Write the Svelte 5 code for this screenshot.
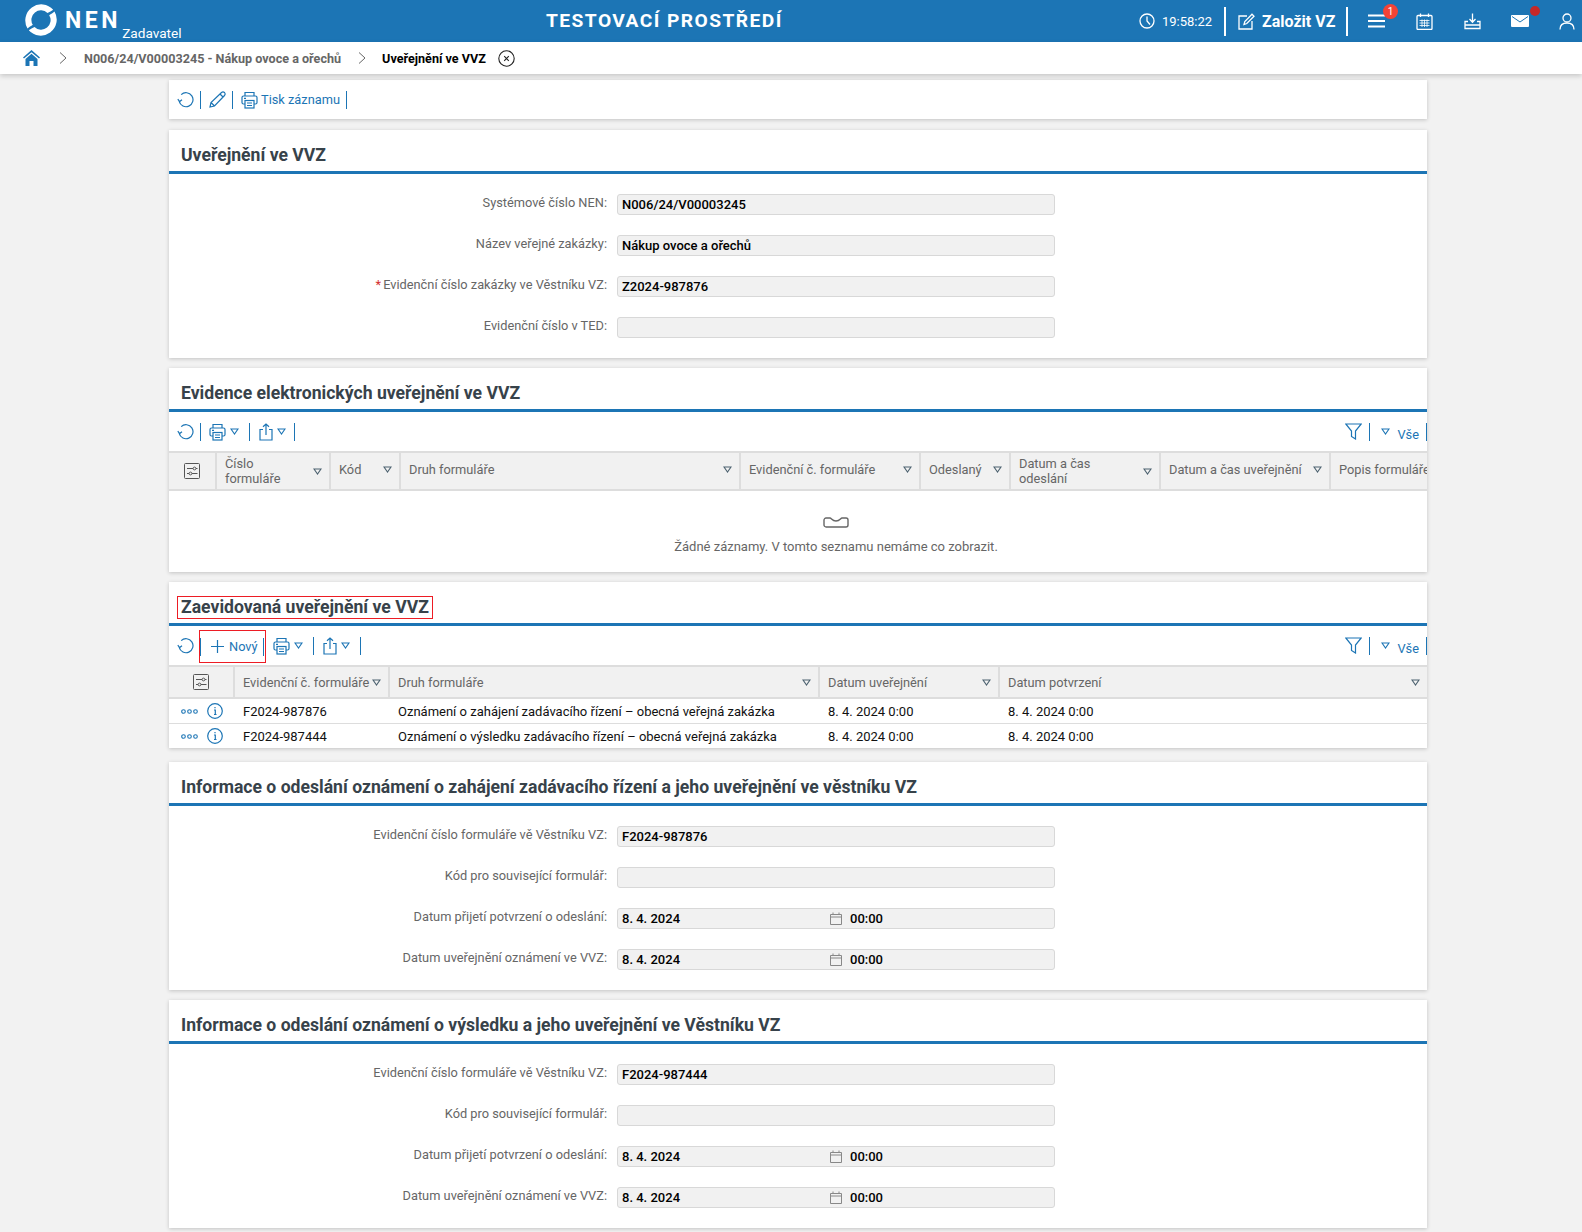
<script>
	const topForm = [
		{ label: 'Systémové číslo NEN:', value: 'N006/24/V00003245' },
		{ label: 'Název veřejné zakázky:', value: 'Nákup ovoce a ořechů' },
		{ label: 'Evidenční číslo zakázky ve Věstníku VZ:', value: 'Z2024-987876', required: true },
		{ label: 'Evidenční číslo v TED:', value: '' }
	];

	const infoForm = (num) => [
		{ label: 'Evidenční číslo formuláře vě Věstníku VZ:', value: num },
		{ label: 'Kód pro související formulář:', value: '' },
		{ label: 'Datum přijetí potvrzení o odeslání:', value: '8. 4. 2024', time: '00:00' },
		{ label: 'Datum uveřejnění oznámení ve VVZ:', value: '8. 4. 2024', time: '00:00' }
	];

	const evidenceCols = [
		['Číslo', 'formuláře'],
		['Kód'],
		['Druh formuláře'],
		['Evidenční č. formuláře'],
		['Odeslaný'],
		['Datum a čas', 'odeslání'],
		['Datum a čas uveřejnění'],
		['Popis formuláře']
	];

	const registeredCols = ['Evidenční č. formuláře', 'Druh formuláře', 'Datum uveřejnění', 'Datum potvrzení'];

	const rows = [
		['F2024-987876', 'Oznámení o zahájení zadávacího řízení – obecná veřejná zakázka', '8. 4. 2024 0:00', '8. 4. 2024 0:00'],
		['F2024-987444', 'Oznámení o výsledku zadávacího řízení – obecná veřejná zakázka', '8. 4. 2024 0:00', '8. 4. 2024 0:00']
	];

	const swoosh = 'M29.2 6.7A16 16 0 0 0 3.5 25.5C5 24 7 23 8.8 21.8A9.5 9.5 0 0 1 23.5 10C25.5 9 27.5 8 29.2 6.7Z';
</script>

{#snippet refresh()}
	<svg class="ico" width="17" height="17" viewBox="0 0 17 17">
		<path d="M4.2 3.6A7 7 0 1 1 2.2 10.4" />
		<path d="M0.8 8.2L2.6 10.6L5 8.8" />
	</svg>
{/snippet}

{#snippet print()}
	<svg class="ico" width="17" height="18" viewBox="0 0 17 18">
		<path d="M4 5V1.5H13V5" />
		<rect x="1" y="5" width="15" height="8" rx="1.5" />
		<rect x="4" y="9.5" width="9" height="7.5" fill="#fff" />
		<path d="M6 12H11M6 14.5H11M3 7.3H5" />
	</svg>
{/snippet}

{#snippet share()}
	<svg class="ico" width="14" height="18" viewBox="0 0 14 18">
		<path d="M4 6.5H1V17H13V6.5H10" />
		<path d="M7 12V1M4 3.8L7 1L10 3.8" />
	</svg>
{/snippet}

{#snippet tri()}
	<svg class="tri" width="9" height="7" viewBox="0 0 9 7"><path d="M1 1H8L4.5 6Z" /></svg>
{/snippet}

{#snippet forms(items)}
	<div class="form">
		{#each items as f}
			<div class="form-row">
				<span class="form-label">{#if f.required}<i>*</i>{/if}{f.label}</span>
				<div class="field">
					<span class="field-value">{f.value}</span>
					{#if f.time}
						<svg class="field-cal" width="12" height="13" viewBox="0 0 12 13">
							<path d="M0.5 2.5H11.5V12.5H0.5ZM0.5 5H11.5M3 0.5V3M9 0.5V3" />
						</svg>
						<span class="field-value time-value">{f.time}</span>
					{/if}
				</div>
			</div>
		{/each}
	</div>
{/snippet}

{#snippet settingsIcon()}
	<svg class="settings" width="16" height="16" viewBox="0 0 16 16">
		<rect x="0.5" y="0.5" width="15" height="15" rx="1" />
		<path d="M3 5.5H9M12 5.5H13.5M3 10.5H5M8 10.5H13.5" />
		<circle cx="10.5" cy="5.5" r="1.4" />
		<circle cx="6.5" cy="10.5" r="1.4" />
	</svg>
{/snippet}

{#snippet rightTools()}
	<div class="tools-right">
		<svg class="ico" width="17" height="17" viewBox="0 0 17 17"><path d="M0.8 1H16.2L10.5 8V16L6.5 13.5V8Z" /></svg>
		<span class="sep filter-sep"></span>
		{@render tri()}
		<span class="link all">Vše</span>
		<span class="sep"></span>
	</div>
{/snippet}

<header class="topbar">
	<div class="brand">
		<svg width="34" height="34" viewBox="0 0 34 34">
			<path fill="#fff" d={swoosh} />
			<path fill="#fff" transform="rotate(180 17 17)" d={swoosh} />
		</svg>
		<b class="brand-name">NEN</b>
		<span class="brand-role">Zadavatel</span>
	</div>
	<div class="env">TESTOVACÍ PROSTŘEDÍ</div>
	<div class="top-tools">
		<svg class="white clock" width="16" height="16" viewBox="0 0 16 16">
			<circle cx="8" cy="8" r="7" /><path d="M8 3.5V8L11 11.5" />
		</svg>
		<span class="time">19:58:22</span>
		<span class="top-sep"></span>
		<svg class="white" width="17" height="17" viewBox="0 0 17 17">
			<path d="M9 3H1V16H14V8" /><path d="M6 11.5L6.8 8.5L14 1.2L16 3.2L8.8 10.5Z" />
		</svg>
		<b class="create">Založit VZ</b>
		<span class="top-sep"></span>
		<div class="top-icon menu">
			<svg class="white thick" width="17" height="14" viewBox="0 0 17 14"><path d="M0 1.5H17M0 7H17M0 12.5H17" /></svg>
			<span class="badge">1</span>
		</div>
		<div class="top-icon">
			<svg class="white" width="17" height="17" viewBox="0 0 17 17">
				<rect x="1" y="2.5" width="15" height="14" rx="1" />
				<path d="M4.5 0.5V4M12.5 0.5V4" />
				<path class="dense" d="M3.5 7.5H13.5M3.5 10H13.5M3.5 12.5H13.5M6 6.5V14M8.5 6.5V14M11 6.5V14" />
			</svg>
		</div>
		<div class="top-icon">
			<svg class="white" width="17" height="17" viewBox="0 0 17 17">
				<path d="M8.5 0.5V9M5.5 6L8.5 9.2L11.5 6" />
				<path d="M4 8.5H1V15.5H16V8.5H13M1 12H16" />
			</svg>
		</div>
		<div class="top-icon mail">
			<svg width="18" height="12" viewBox="0 0 18 12">
				<rect width="18" height="12" rx="1" fill="#fff" />
				<path d="M1 1.5L9 7L17 1.5" fill="none" stroke="#1c75b5" stroke-width="1" />
			</svg>
			<span class="dot"></span>
		</div>
		<div class="top-icon">
			<svg class="white" width="16" height="17" viewBox="0 0 16 17">
				<circle cx="8" cy="5" r="4" /><path d="M1 16.5C1 12 4 10 8 10C12 10 15 12 15 16.5" />
			</svg>
		</div>
	</div>
</header>

<nav class="crumbs">
	<svg class="home" width="17" height="16" viewBox="0 0 17 16">
		<path fill="#1c75b5" d="M8.5 0L0 7.5L1 8.6L8.5 2.2L16 8.6L17 7.5ZM8.5 3.8L2.5 9V16H6.5V11H10.5V16H14.5V9Z" />
	</svg>
	<svg class="chev first" width="8" height="12" viewBox="0 0 8 12"><path d="M1 0.5L7 6L1 11.5" /></svg>
	<b class="crumb">N006/24/V00003245 - Nákup ovoce a ořechů</b>
	<svg class="chev" width="8" height="12" viewBox="0 0 8 12"><path d="M1 0.5L7 6L1 11.5" /></svg>
	<b class="crumb current">Uveřejnění ve VVZ</b>
	<svg class="close" width="17" height="17" viewBox="0 0 17 17">
		<circle cx="8.5" cy="8.5" r="7.7" /><path d="M6.2 6.2L10.8 10.8M10.8 6.2L6.2 10.8" />
	</svg>
</nav>

<main class="page">
	<div class="card toolbar-card">
		<div class="tools">
			{@render refresh()}
			<span class="sep"></span>
			<svg class="ico" width="17" height="17" viewBox="0 0 17 17">
				<path d="M1 16L2 11.5L12.5 1.5C13.5 0.7 14.5 0.7 15.5 1.5C16.3 2.5 16.3 3.5 15.5 4.5L5.5 15ZM11 3L14.5 6.5M2 11.5L5.5 15" />
			</svg>
			<span class="sep"></span>
			{@render print()}
			<span class="link print-label">Tisk záznamu</span>
			<span class="sep"></span>
		</div>
	</div>

	<section class="card">
		<h2><span>Uveřejnění ve VVZ</span></h2>
		{@render forms(topForm)}
	</section>

	<section class="card">
		<h2><span>Evidence elektronických uveřejnění ve VVZ</span></h2>
		<div class="tools table-tools">
			{@render refresh()}
			<span class="sep"></span>
			{@render print()}
			{@render tri()}
			<span class="sep wide"></span>
			{@render share()}
			{@render tri()}
			<span class="sep end"></span>
			{@render rightTools()}
		</div>
		<div class="thead evidence">
			<div class="th center">{@render settingsIcon()}</div>
			{#each evidenceCols as col, i}
				<div class="th" class:single={col.length === 1}>
					<span class="th-text">
						{#each col as line}<span class="th-line">{line}</span>{/each}
					</span>
					{#if i < evidenceCols.length - 1}{@render tri()}{/if}
				</div>
			{/each}
		</div>
		<div class="empty">
			<svg width="26" height="11" viewBox="0 0 26 11">
				<path d="M3 1H7C8.5 1 9 4 13 4C17 4 17.5 1 19 1H23C24 1 25 2 25 3V8C25 9 24 10 23 10H3C2 10 1 9 1 8V3C1 2 2 1 3 1Z" />
			</svg>
			<p>Žádné záznamy. V tomto seznamu nemáme co zobrazit.</p>
		</div>
	</section>

	<section class="card">
		<h2 class="marked"><span>Zaevidovaná uveřejnění ve VVZ</span></h2>
		<div class="tools table-tools">
			{@render refresh()}
			<div class="new-btn">
				<span class="sep"></span>
				<svg class="ico plus" width="13" height="13" viewBox="0 0 13 13"><path d="M6.5 0V13M0 6.5H13" /></svg>
				<span class="link">Nový</span>
				<span class="sep"></span>
			</div>
			{@render print()}
			{@render tri()}
			<span class="sep wide"></span>
			{@render share()}
			{@render tri()}
			<span class="sep wide"></span>
			{@render rightTools()}
		</div>
		<div class="thead registered">
			<div class="th center">{@render settingsIcon()}</div>
			{#each registeredCols as col}
				<div class="th"><span class="th-text">{col}</span>{@render tri()}</div>
			{/each}
		</div>
		{#each rows as row}
			<div class="tr">
				<div class="td actions">
					<svg class="ico dots" width="17" height="5" viewBox="0 0 17 5">
						<circle cx="2.5" cy="2.5" r="1.8" /><circle cx="8.5" cy="2.5" r="1.8" /><circle cx="14.5" cy="2.5" r="1.8" />
					</svg>
					<svg class="ico" width="16" height="16" viewBox="0 0 16 16">
						<circle cx="8" cy="8" r="7.3" /><path d="M7 7H8.3V11.5M7 11.5H9.5M8 4V5.2" />
					</svg>
				</div>
				{#each row as cell}<div class="td">{cell}</div>{/each}
			</div>
		{/each}
	</section>

	<section class="card first-info">
		<h2><span>Informace o odeslání oznámení o zahájení zadávacího řízení a jeho uveřejnění ve věstníku VZ</span></h2>
		{@render forms(infoForm('F2024-987876'))}
	</section>

	<section class="card">
		<h2><span>Informace o odeslání oznámení o výsledku a jeho uveřejnění ve Věstníku VZ</span></h2>
		{@render forms(infoForm('F2024-987444'))}
	</section>
</main>

<style>
	:global(body) {
		margin: 0;
		background: #f2f2f2;
		font-family: Roboto, 'Liberation Sans', sans-serif;
		font-size: 12.8px;
		color: #666;
	}

	svg {
		display: block;
		flex: none;
	}

	/* top bar */
	.topbar {
		height: 42px;
		background: #1c75b5;
		color: #fff;
		display: flex;
		align-items: center;
	}

	.brand {
		width: 546px;
		height: 42px;
		display: flex;
		align-items: flex-start;
		box-sizing: border-box;
		padding: 3px 0 0 24px;
	}

	.brand-name {
		font-size: 23px;
		letter-spacing: 3.6px;
		line-height: 27px;
		margin: 4px 0 0 7px;
	}

	.brand-role {
		font-size: 13.6px;
		line-height: 15px;
		margin: 23px 0 0 1px;
	}

	.env {
		font-size: 19.2px;
		font-weight: 700;
		letter-spacing: 1.44px;
		padding-bottom: 2px;
	}

	.top-tools {
		margin-left: auto;
		display: flex;
		align-items: center;
		padding-right: 6px;
		height: 42px;
	}

	.white {
		fill: none;
		stroke: #fff;
		stroke-width: 1.3;
	}

	.white.thick {
		stroke-width: 2;
	}

	.white .dense {
		stroke-width: 0.8;
	}

	.time {
		margin-left: 7px;
		width: 62px;
		font-size: 13px;
	}

	.top-sep {
		width: 2px;
		height: 29px;
		background: #fff;
	}

	.create {
		font-size: 16px;
		margin-left: 7px;
		width: 84px;
	}

	.top-sep + svg {
		margin-left: 12px;
	}

	.top-icon {
		position: relative;
		width: 17px;
		margin-left: 31px;
	}

	.top-icon.menu {
		margin-left: 20px;
	}

	.top-icon.mail {
		margin-left: 30px;
	}

	.badge {
		position: absolute;
		left: 15px;
		top: -10px;
		width: 15px;
		height: 15px;
		border-radius: 50%;
		background: #f44336;
		font-size: 10px;
		line-height: 15px;
		text-align: center;
	}

	.dot {
		position: absolute;
		left: 19px;
		top: -9px;
		width: 10px;
		height: 10px;
		border-radius: 50%;
		background: #c62828;
	}

	/* breadcrumb */
	.crumbs {
		height: 32px;
		background: #fff;
		display: flex;
		align-items: center;
		padding-left: 23px;
		box-shadow: 0 2px 5px rgba(0, 0, 0, 0.18);
		position: relative;
	}

	.chev {
		fill: none;
		stroke: #666;
		stroke-width: 1;
		margin: 0 16px 0 17px;
	}

	.chev.first {
		margin: 0 17px 0 19px;
	}

	.crumb {
		font-weight: 700;
		font-size: 12.6px;
		color: #666;
	}

	.crumb.current {
		color: #000;
	}

	.close {
		fill: none;
		stroke: #222;
		stroke-width: 1.1;
		margin-left: 12px;
	}

	/* content column */
	.page {
		width: 1258px;
		margin: 6px 0 0 169px;
		display: flex;
		flex-direction: column;
		gap: 10px;
		height: 1154px;
	}

	.card {
		background: #fff;
		box-shadow: 0 1px 4px rgba(0, 0, 0, 0.2);
	}

	.first-info {
		margin-top: 4px;
	}

	.toolbar-card {
		height: 39px;
		display: flex;
		align-items: center;
		margin-bottom: 1px;
	}

	h2 {
		margin: 0;
		height: 41px;
		border-bottom: 3px solid #1c75b5;
		box-sizing: content-box;
		padding: 0 0 0 12px;
		font-size: 17.6px;
		font-weight: 700;
		line-height: 50px;
		color: #37424a;
		white-space: nowrap;
	}

	h2.marked {
		padding-left: 8px;
		display: block;
	}

	h2.marked span {
		display: inline-block;
		border: 1px solid #ed1c24;
		padding: 0 3px;
		line-height: 21px;
		vertical-align: 0;
	}

	/* toolbars */
	.tools {
		flex: 1;
		display: flex;
		align-items: center;
		padding-left: 8px;
		height: 39px;
	}

	.ico {
		fill: none;
		stroke: #1c75b5;
		stroke-width: 1.2;
	}

	.tri {
		fill: none;
		stroke: #1c75b5;
		stroke-width: 1.1;
		margin-left: 4px;
	}

	.sep {
		width: 1px;
		height: 18px;
		background: #1c75b5;
		margin: 0 8px 0 6px;
		flex: none;
	}

	.sep.wide {
		margin: 0 9px 0 10px;
	}

	.sep.end {
		margin-left: 8px;
	}

	.link {
		color: #1c75b5;
		font-size: 12.8px;
		white-space: nowrap;
	}

	.print-label {
		margin-left: 3px;
	}

	.tools-right {
		margin-left: auto;
		display: flex;
		align-items: center;
	}

	.tools-right .tri {
		margin-left: 0;
	}

	.tools-right .sep {
		margin: 0 0 0 7px;
	}

	.tools-right .filter-sep {
		margin: 0 11px 0 7px;
	}

	.all {
		margin-left: 7px;
		padding-top: 5px;
	}

	.new-btn {
		display: flex;
		align-items: center;
		border: 1px solid #ed1c24;
		box-sizing: border-box;
		width: 67px;
		height: 33px;
		margin: 2px 7px 0 5px;
	}

	.new-btn .sep {
		margin: 0;
	}

	.new-btn .sep:last-child {
		margin-left: auto;
		margin-right: 1px;
	}

	.new-btn .plus {
		margin-left: 10px;
	}

	.new-btn .link {
		margin-left: 5px;
	}

	/* tables */
	.thead {
		display: grid;
		background: #f1f1f1;
		border-top: 2px solid #ddd;
		border-bottom: 2px solid #ddd;
		overflow: hidden;
	}

	.thead.evidence {
		height: 36px;
		grid-template-columns: 48px 114px 70px 340px 180px 90px 150px 170px 96px;
	}

	.thead.registered {
		height: 30px;
		grid-template-columns: 66px 155px 430px 180px 427px;
	}

	.th {
		display: flex;
		align-items: center;
		padding: 0 7px 0 8px;
		border-right: 2px solid #ddd;
		box-sizing: border-box;
		white-space: nowrap;
		min-width: 0;
	}

	.th.single {
		padding-bottom: 4px;
	}

	.th:last-child {
		border-right: 0;
	}

	.th.center {
		justify-content: center;
		padding: 0;
	}

	.th-text {
		flex: 1;
		line-height: 15px;
		color: #666;
		min-width: 0;
	}

	.th-line {
		display: block;
	}

	.th .tri {
		stroke: #4d6270;
		margin: 0;
	}

	.settings {
		fill: none;
		stroke: #555;
		stroke-width: 1;
	}

	.tr {
		display: grid;
		height: 25px;
		border-bottom: 1px solid #ddd;
		box-sizing: border-box;
		align-items: center;
		grid-template-columns: 65px 155px 430px 180px 428px;
	}

	.tr:last-child {
		border-bottom: 0;
		height: 24px;
	}

	.td {
		color: #111;
		font-size: 13px;
		padding-left: 9px;
		white-space: nowrap;
	}

	.td.actions {
		display: flex;
		align-items: center;
		gap: 9px;
		padding-left: 12px;
	}

	.dots {
		stroke-width: 1.1;
	}

	.empty {
		height: 81px;
		box-sizing: border-box;
		padding: 26px 0 0 76px;
		display: flex;
		flex-direction: column;
		align-items: center;
	}

	.empty svg {
		fill: none;
		stroke: #666;
		stroke-width: 1.4;
	}

	.empty p {
		margin: 11px 0 0;
		font-size: 13px;
		line-height: 15px;
		color: #666;
	}

	/* forms */
	.form {
		padding: 20px 0;
		display: flex;
		flex-direction: column;
		gap: 20px;
	}

	.form-row {
		display: grid;
		grid-template-columns: 438px 438px;
		gap: 10px;
		align-items: center;
	}

	.form-label {
		text-align: right;
		padding-bottom: 5px;
		line-height: 15px;
	}

	.form-label i {
		color: #d32f2f;
		font-style: normal;
		margin-right: 2px;
	}

	.field {
		height: 21px;
		box-sizing: border-box;
		background: #f1f1f1;
		border: 1px solid #d8d8d8;
		border-radius: 3px;
		display: flex;
		align-items: center;
		padding: 0 0 0 4px;
	}

	.field-value {
		color: #000;
		font-weight: 500;
		font-size: 13px;
		white-space: nowrap;
		width: 208px;
		flex: none;
	}

	.time-value {
		width: auto;
	}

	.field-cal {
		fill: none;
		stroke: #888;
		stroke-width: 1;
		margin-right: 8px;
	}
</style>
